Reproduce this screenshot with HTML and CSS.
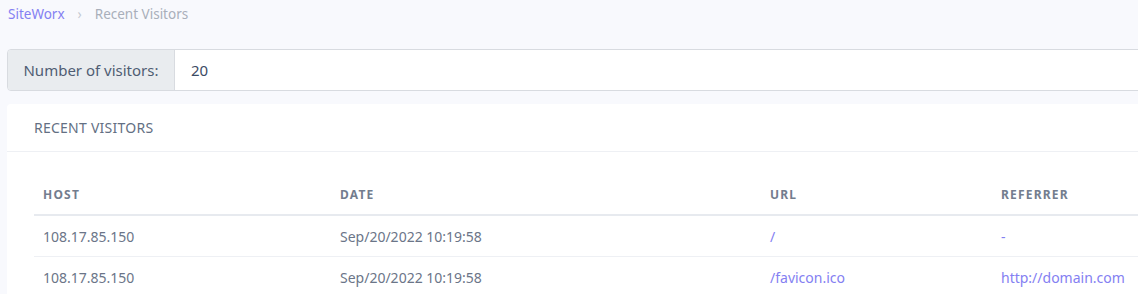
FILE: index.html
```html
<!DOCTYPE html>
<html lang="en">
<head>
  <meta charset="UTF-8">
  <meta name="viewport" content="width=device-width, initial-scale=1.0">
  <title>Recent Visitors</title>
  <link rel="stylesheet" href="styles.css">
</head>
<body>
  <div class="page">
    <ol class="breadcrumb">
      <li><a href="#">SiteWorx</a></li>
      <li class="sep">&rsaquo;</li>
      <li class="active">Recent Visitors</li>
    </ol>

    <div class="input-group">
      <span class="input-label">Number of visitors:</span>
      <input class="input-field" type="text" value="20">
    </div>

    <div class="card">
      <div class="card-header">RECENT VISITORS</div>
      <div class="card-body">
        <table class="visitors">
          <thead>
            <tr>
              <th class="col-host">Host</th>
              <th class="col-date">Date</th>
              <th class="col-url">URL</th>
              <th>Referrer</th>
            </tr>
          </thead>
          <tbody>
            <tr>
              <td>108.17.85.150</td>
              <td>Sep/20/2022 10:19:58</td>
              <td><a href="#">/</a></td>
              <td><a href="#">-</a></td>
            </tr>
            <tr>
              <td>108.17.85.150</td>
              <td>Sep/20/2022 10:19:58</td>
              <td><a href="#">/favicon.ico</a></td>
              <td><a href="#">http://domain.com</a></td>
            </tr>
          </tbody>
        </table>
      </div>
    </div>
  </div>
</body>
</html>
```

FILE: styles.css
```css
html, body {
  margin: 0;
  padding: 0;
  overflow: hidden;
}

body {
  font-family: "Noto Sans", Arial, sans-serif;
  font-size: 14px;
  color: #6b7588;
  background-color: #f8f9fd;
}

a {
  color: #8480f2;
  text-decoration: none;
}

.page {
  width: 1180px;
  padding: 0 7px;
}

.breadcrumb {
  list-style: none;
  margin: 0;
  padding: 5px 1px 0;
  height: 49px;
  box-sizing: border-box;
  display: flex;
  gap: 13px;
  font-size: 13.5px;
}

.breadcrumb .sep {
  color: #c4c9d2;
}

.breadcrumb .active {
  color: #a9afba;
}

.input-group {
  display: flex;
  height: 42px;
  border: 1px solid #d8dbe0;
  border-radius: 4px;
  box-sizing: border-box;
  overflow: hidden;
}

.input-label {
  width: 167px;
  box-sizing: border-box;
  background-color: #e9ecef;
  border-right: 1px solid #d8dbe0;
  color: #4f5d73;
  font-size: 15px;
  display: flex;
  align-items: center;
  justify-content: center;
}

.input-field {
  flex: 1;
  border: 0;
  padding: 0 16px;
  font-family: inherit;
  font-size: 15px;
  color: #3c4b64;
  background-color: #fff;
  outline: none;
}

.card {
  margin-top: 13px;
  background-color: #fff;
  border-radius: 4px;
}

.card-header {
  height: 48px;
  box-sizing: border-box;
  padding: 0 27px;
  display: flex;
  align-items: center;
  border-bottom: 1px solid #eef0f4;
  color: #636f83;
  font-size: 14px;
  letter-spacing: 0.25px;
}

.card-body {
  padding: 23px 27px 0;
}

.visitors {
  width: 100%;
  border-collapse: collapse;
}

.visitors th {
  text-align: left;
  text-transform: uppercase;
  font-size: 12px;
  font-weight: 700;
  letter-spacing: 1.2px;
  color: #737d8e;
  height: 39px;
  padding: 0 9px;
  border-bottom: 2px solid #e7eaef;
}

.visitors td {
  height: 40px;
  padding: 0 9px;
  border-bottom: 1px solid #eef0f4;
}

.col-host {
  width: 279px;
}

.col-date {
  width: 412px;
}

.col-url {
  width: 213px;
}
```
